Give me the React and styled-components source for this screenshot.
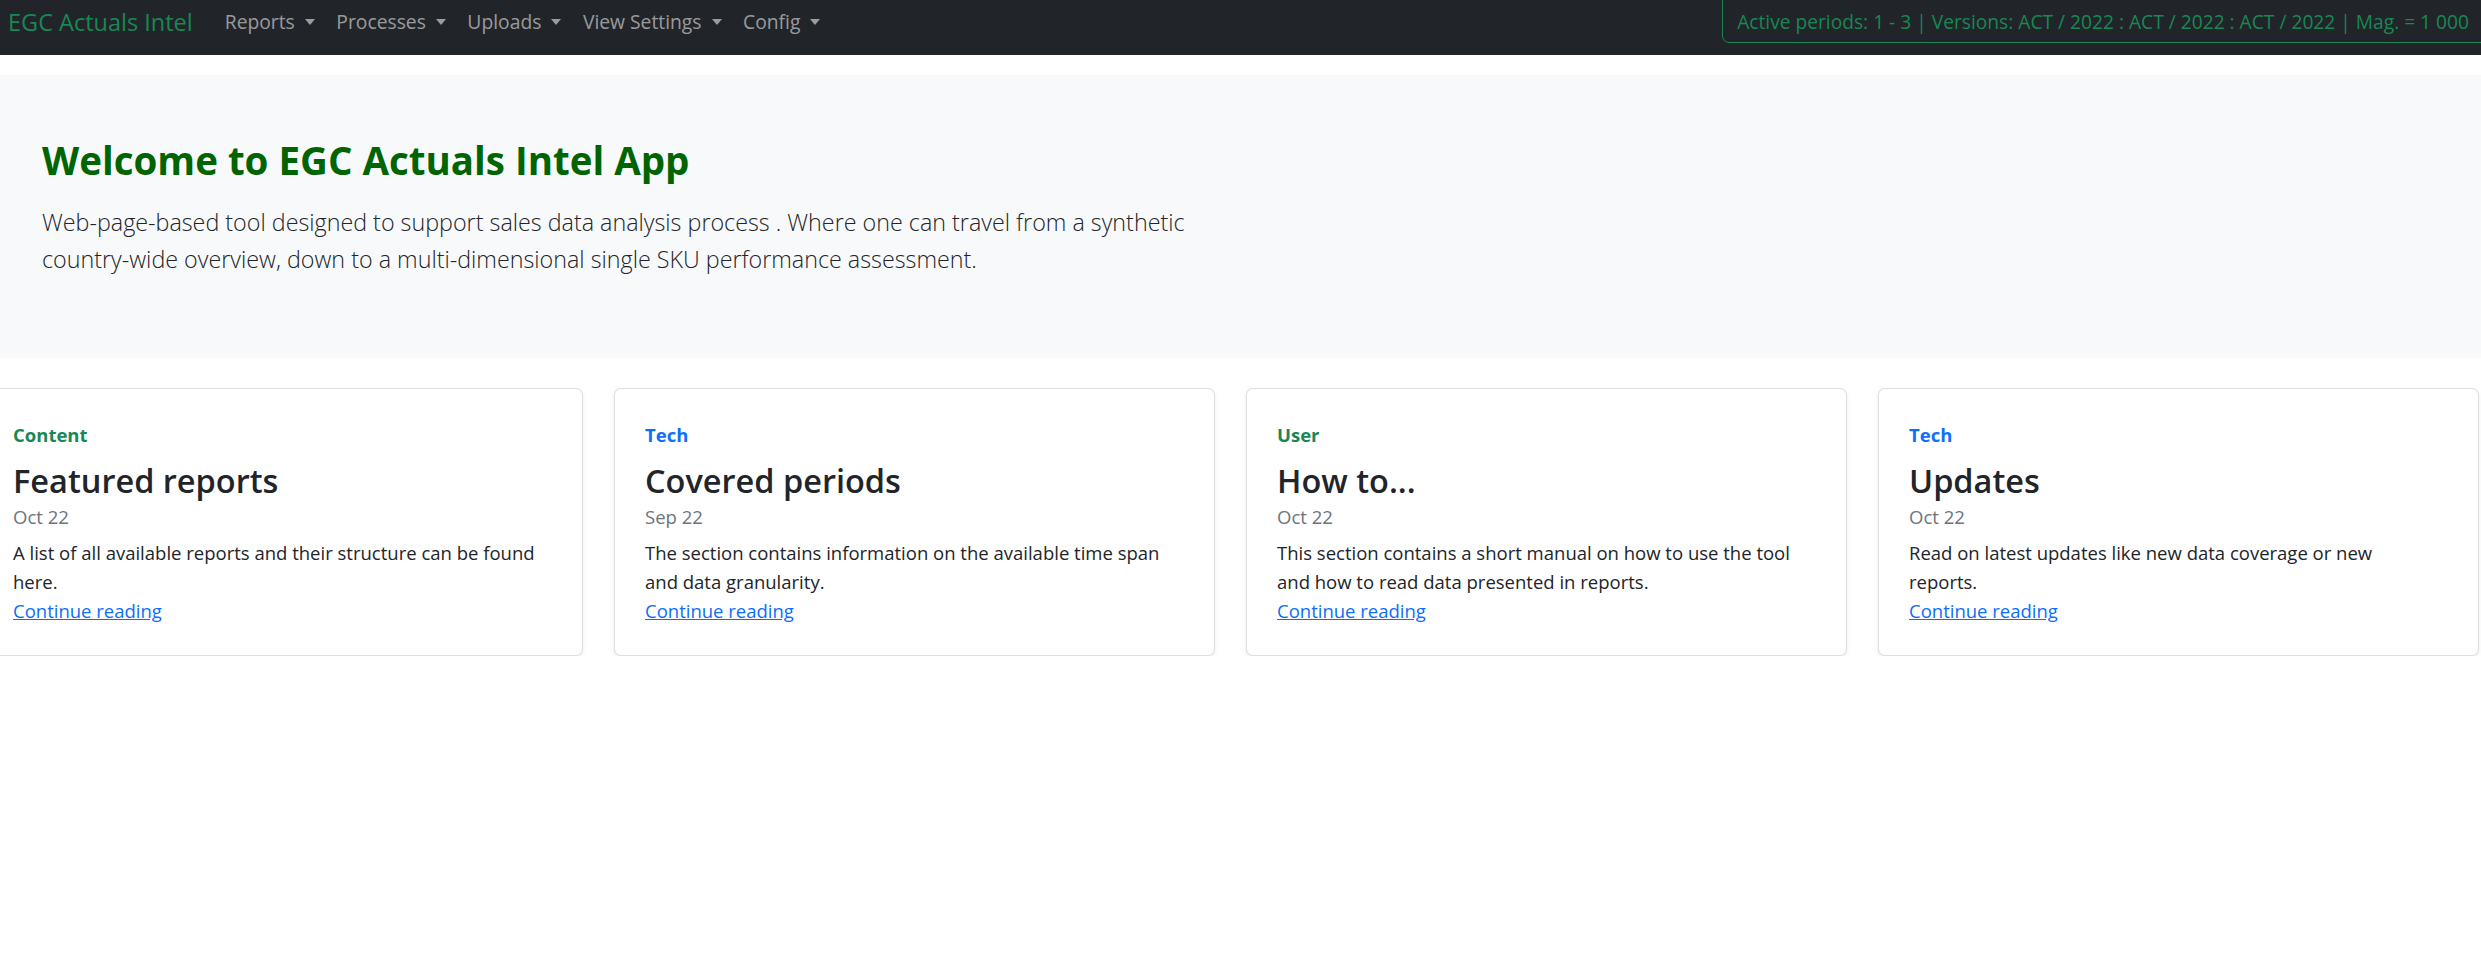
import React from 'react';
import styled, { createGlobalStyle } from 'styled-components';

const GlobalStyle = createGlobalStyle`
  html, body {
    margin: 0;
    padding: 0;
    background: #fff;
    font-family: "Open Sans", "Noto Sans", sans-serif;
    color: #212529;
    overflow-x: hidden;
  }
  * {
    box-sizing: border-box;
  }
`;

const navItems = [ 'Reports', 'Processes', 'Uploads', 'View Settings', 'Config' ];

// text is kept in the lines the cards show
const cards = [
  {
    tag: 'Content',
    tone: 'green',
    title: 'Featured reports',
    date: 'Oct 22',
    lines: [ 'A list of all available reports and their structure can be found', 'here.' ]
  },
  {
    tag: 'Tech',
    tone: 'blue',
    title: 'Covered periods',
    date: 'Sep 22',
    lines: [ 'The section contains information on the available time span', 'and data granularity.' ]
  },
  {
    tag: 'User',
    tone: 'green',
    title: 'How to...',
    date: 'Oct 22',
    lines: [ 'This section contains a short manual on how to use the tool', 'and how to read data presented in reports.' ]
  },
  {
    tag: 'Tech',
    tone: 'blue',
    title: 'Updates',
    date: 'Oct 22',
    lines: [ 'Read on latest updates like new data coverage or new', 'reports.' ]
  }
];

function App() {
  return (
    <>
      <GlobalStyle />
      <Navbar>
        <NavRow>
          <Brand href="#">EGC Actuals Intel</Brand>
          <NavList>
            { navItems.map(item => (
              <NavLink key={ item }>{ item }</NavLink>
            )) }
          </NavList>
          <StatusBox>
            Active periods: 1 - 3 | Versions: ACT / 2022 : ACT / 2022 : ACT / 2022 | Mag. = 1 000
          </StatusBox>
        </NavRow>
      </Navbar>

      <Hero>
        <HeroTitle>Welcome to EGC Actuals Intel App</HeroTitle>
        <Lead>
          Web-page-based tool designed to support sales data analysis process . Where one can travel from a synthetic
          country-wide overview, down to a multi-dimensional single SKU performance assessment.
        </Lead>
      </Hero>

      <CardRow>
        { cards.map(card => (
          <Card key={ card.title }>
            <Tag tone={ card.tone }>{ card.tag }</Tag>
            <CardTitle>{ card.title }</CardTitle>
            <CardDate>{ card.date }</CardDate>
            <CardText>
              { card.lines.map((line, i) => (
                <React.Fragment key={ i }>
                  { i > 0 && <br /> }
                  { line }
                </React.Fragment>
              )) }
            </CardText>
            <ReadMore href="#">Continue reading</ReadMore>
          </Card>
        )) }
      </CardRow>
    </>
  );
}

export default App;

const Navbar = styled.nav`
  background: #212529;
  height: 55px;
  padding: 0 0 12px 8px;
  overflow: hidden;
`;

const NavRow = styled.div`
  display: flex;
  align-items: center;
  height: 43px;
`;

const Brand = styled.a`
  color: #198754;
  font-size: 23.5px;
  text-decoration: none;
  margin-right: 32px;
  white-space: nowrap;
`;

const NavList = styled.ul`
  display: flex;
  list-style: none;
  margin: 0;
  padding: 0;
  gap: 21.5px;
`;

const NavLink = styled.li`
  color: rgba(255, 255, 255, 0.55);
  font-size: 19.3px;
  white-space: nowrap;

  &::after {
    content: '';
    display: inline-block;
    margin-left: 10px;
    vertical-align: 4px;
    border-top: 6px solid;
    border-left: 5.5px solid transparent;
    border-right: 5.5px solid transparent;
  }
`;

const StatusBox = styled.div`
  margin: -10px -14px 0 auto;
  height: 53px;
  display: flex;
  align-items: center;
  padding: 10px 25px 0 14px;
  border: 1px solid #198754;
  border-radius: 7px;
  color: #198754;
  font-size: 19.2px;
  white-space: nowrap;
`;

const Hero = styled.section`
  margin-top: 20px;
  background: #f8f9fa;
  height: 283px;
  padding: 62px 42px 0;
`;

const HeroTitle = styled.h1`
  margin: 0 0 21px;
  color: #006400;
  font-size: 38.5px;
  font-weight: 700;
  line-height: 1.2;
`;

const Lead = styled.p`
  margin: 0;
  max-width: 1200px;
  font-size: 23.3px;
  font-weight: 300;
  line-height: 37px;
  color: #212529;
`;

const CardRow = styled.div`
  display: grid;
  grid-template-columns: repeat(4, 601px);
  gap: 31px;
  margin: 30px 0 0 -18px;
`;

const Card = styled.div`
  height: 268px;
  padding: 32px 30px 0;
  border: 1px solid rgba(0, 0, 0, 0.125);
  border-radius: 7px;
  box-shadow: 0 2px 4px rgba(0, 0, 0, 0.075);
  background: #fff;
`;

const Tag = styled.strong`
  display: block;
  font-size: 18.5px;
  font-weight: 700;
  line-height: 28px;
  margin-bottom: 11.6px;
  color: ${ props => props.tone === 'blue' ? '#0d6efd' : '#198754' };
`;

const CardTitle = styled.h3`
  margin: 0;
  font-size: 32.5px;
  font-weight: 600;
  line-height: 40px;
`;

const CardDate = styled.div`
  margin-top: 2.4px;
  color: #6c757d;
  font-size: 18.5px;
  line-height: 28px;
  margin-bottom: 7.5px;
`;

const CardText = styled.p`
  margin: 0;
  font-size: 18.5px;
  line-height: 29px;
`;

const ReadMore = styled.a`
  display: inline-block;
  color: #0d6efd;
  font-size: 18.5px;
  line-height: 29px;
  text-decoration: underline;
`;
